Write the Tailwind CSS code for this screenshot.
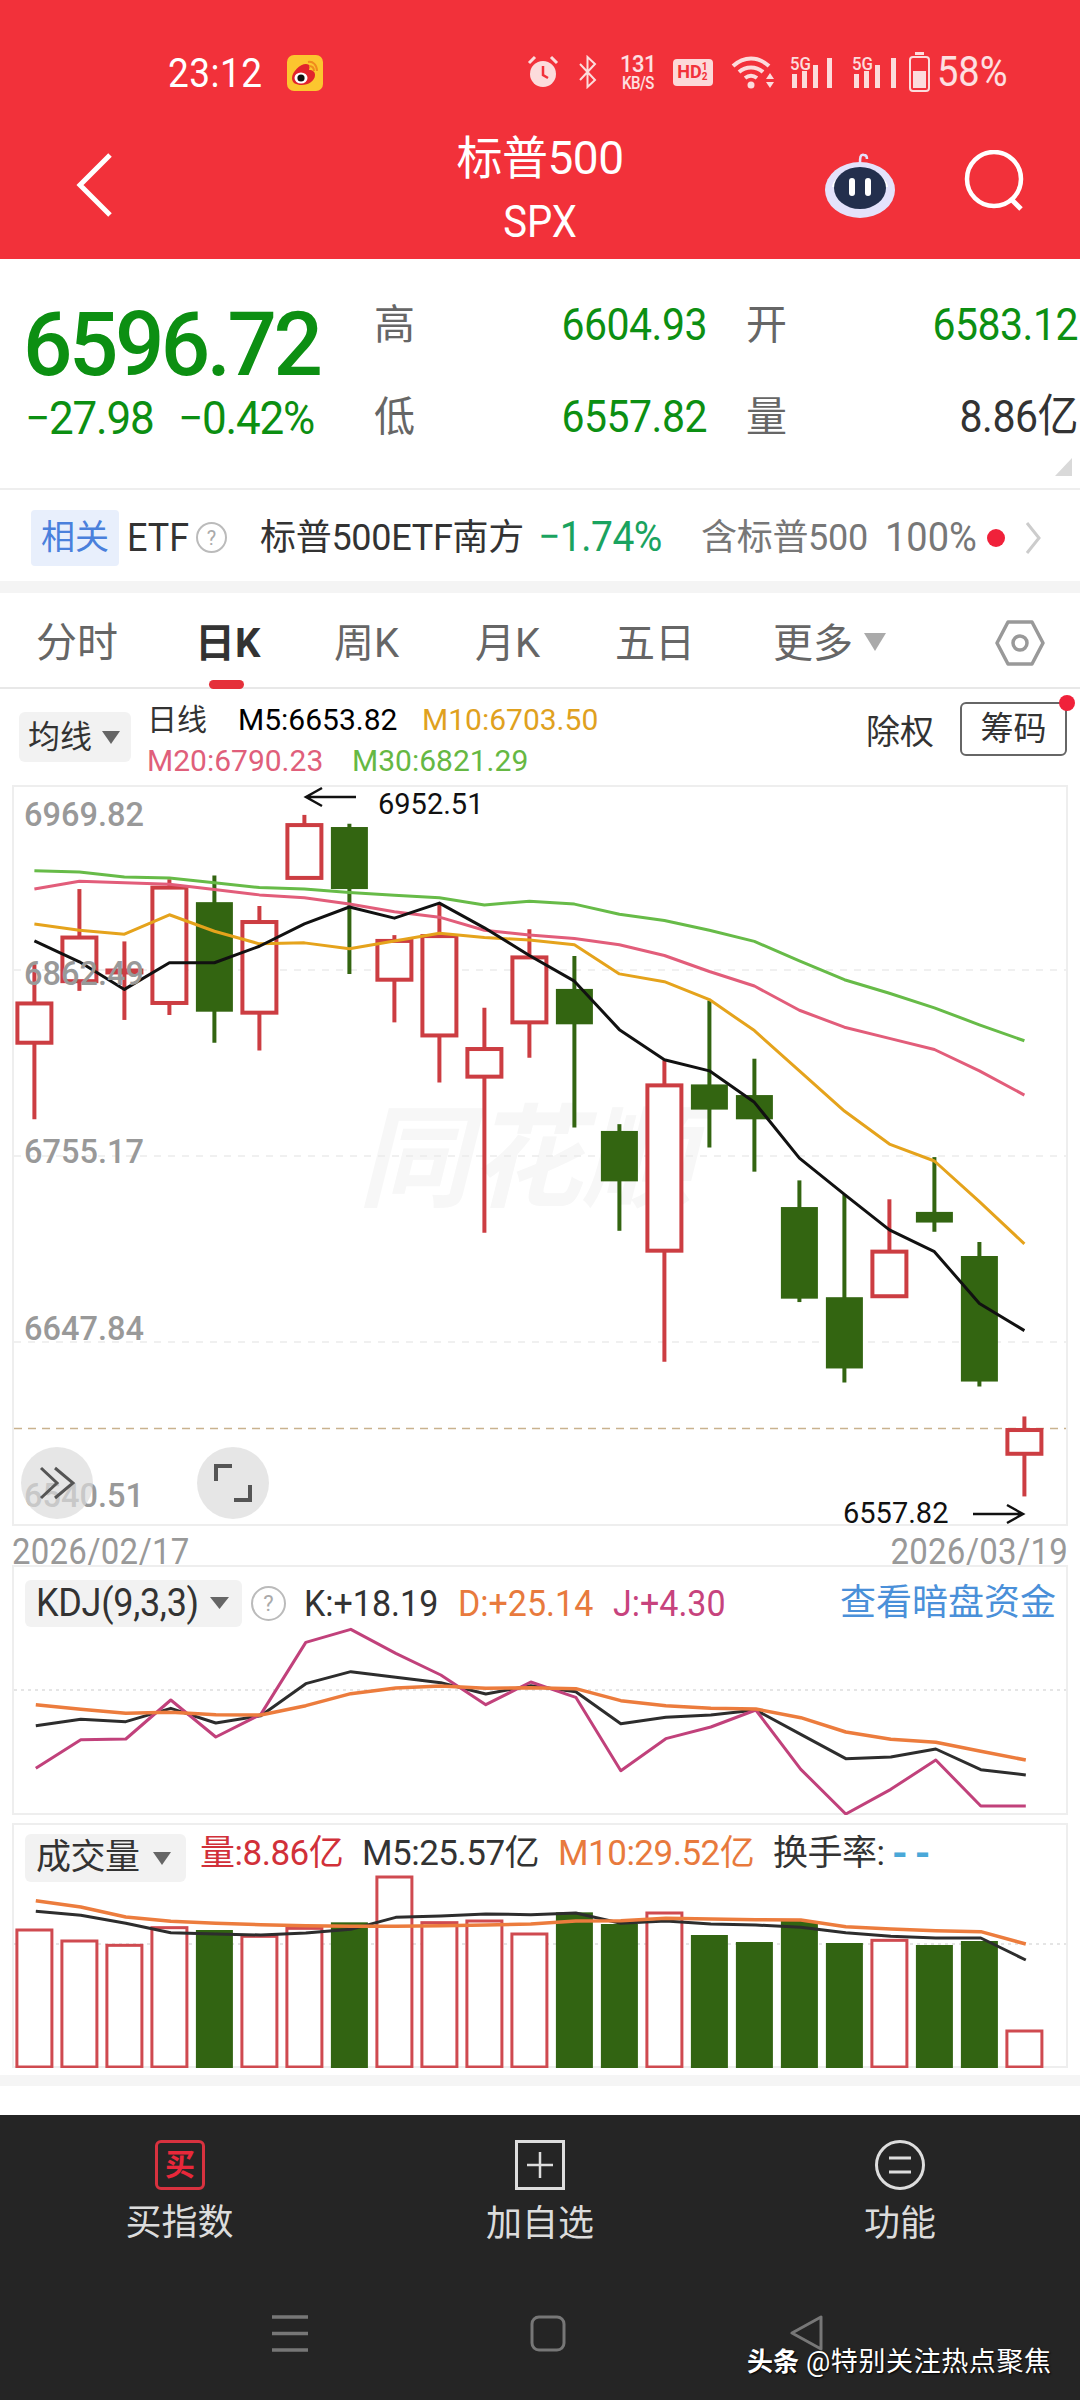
<!DOCTYPE html>
<html lang="zh-CN">
<head>
    <meta charset="UTF-8">
    <meta name="viewport" content="width=device-width, initial-scale=1.0">
    <title>标普500</title>
    <script src="https://cdn.jsdelivr.net/npm/@tailwindcss/browser@4"></script>
</head>
<body class="w-[1080px] h-[2400px] overflow-hidden bg-white font-[Roboto,'Noto_Sans_CJK_SC',sans-serif] text-[#333]">

    <!-- 顶部红色区域 -->
    <header class="h-[259px] bg-[#f2313a] text-white">
        <div class="h-[116px] pt-[30px] flex items-center relative">
            <span class="ml-[168px] text-[37px] leading-none tracking-[0.5px] scale-y-[1.08]">23:12</span>
            <svg class="ml-[24px]" width="36" height="36" viewBox="0 0 36 36">
                <rect width="36" height="36" rx="7" fill="#fcc62f"/>
                <path d="M5 23c0-6 8-14 14-14 4 0 4 3 3 6 4 0 6 2 6 5 0 6-7 10-13 10S5 28 5 23z" fill="#e2232c"/>
                <ellipse cx="14" cy="23" rx="6.500" ry="5.500" fill="#fff"/>
                <circle cx="14" cy="23" r="3.600" fill="#111"/>
                <path d="M21 7c5-1 9 3 9 9M22 11c3 0 5 2 5 5" fill="none" stroke="#f08a1d" stroke-width="2"/>
            </svg>
            <div class="absolute left-[527px] top-[52px] h-[40px] w-[490px] flex items-center text-white/85">
                <svg width="32" height="34" viewBox="0 0 32 34">
                    <circle cx="16" cy="19" r="13" fill="#fcdcdc"/>
                    <path d="M16 11v9l5 3" fill="none" stroke="#f2313a" stroke-width="2.500"/>
                    <path d="M2 8l6-6M30 8l-6-6" stroke="#fcdcdc" stroke-width="3"/>
                </svg>
                <svg class="ml-[18px]" width="21" height="34" viewBox="0 0 21 34">
                    <path d="M3 9l15 16-7.500 7V2l7.500 7L3 25" fill="none" stroke="#fcdcdc" stroke-width="2"/>
                </svg>
                <div class="ml-[20px] w-[40px] flex flex-col items-center font-medium">
                    <span class="text-[22px] leading-[19px] tracking-[-0.5px] scale-y-[1.1]">131</span>
                    <span class="text-[15px] leading-[15px] mt-[3px] tracking-[-0.5px] scale-y-[1.2]">KB/S</span>
                </div>
                <div class="ml-[15px] w-[40px] h-[27px] rounded-[4px] bg-[#fcd9d9] flex items-center justify-center text-[#f2313a] text-[18px] font-bold leading-none">HD<span class="text-[10px] leading-[10px] w-[7px]">1 2</span></div>
                <svg class="ml-[17px]" width="46" height="34" viewBox="0 0 46 34">
                    <path d="M3 11c11-10 25-10 36 0M9 17c7-6 17-6 24 0M15 23c4-3 8-3 12 0" fill="none" stroke="#fcdcdc" stroke-width="4"/>
                    <circle cx="21" cy="30" r="3.500" fill="#fcdcdc"/>
                    <path d="M36 24l4-6 4 6zM36 27l4 6 4-6z" fill="#fcdcdc"/>
                </svg>
                <svg class="ml-[14px] overflow-visible" width="45" height="34" viewBox="0 0 45 34" fill="#fcdcdc">
                    <rect x="2" y="19" width="5" height="14"/><rect x="12" y="16" width="5" height="17"/><rect x="23" y="10" width="5" height="23"/><rect x="37" y="3" width="5" height="30"/>
                    <text x="0" y="15" font-size="18" font-weight="500" textLength="21" lengthAdjust="spacingAndGlyphs">5G</text>
                </svg>
                <svg class="ml-[17px] overflow-visible" width="47" height="34" viewBox="0 0 47 34" fill="#fcdcdc">
                    <rect x="2" y="19" width="5" height="14"/><rect x="12" y="16" width="5" height="17"/><rect x="23" y="10" width="5" height="23"/><rect x="39" y="3" width="5" height="30"/>
                    <text x="0" y="15" font-size="18" font-weight="500" textLength="21" lengthAdjust="spacingAndGlyphs">5G</text>
                </svg>
                <svg class="ml-[10px]" width="21" height="40" viewBox="0 0 21 40">
                    <rect x="6" y="0" width="9" height="3" fill="#fcdcdc"/>
                    <rect x="1" y="5" width="19" height="34" rx="3" fill="none" stroke="#fcdcdc" stroke-width="2"/>
                    <rect x="4" y="19" width="13" height="17" fill="#fcdcdc"/>
                </svg>
                <span class="ml-[7px] text-[38px] leading-none scale-y-[1.1]">58%</span>
            </div>
        </div>
        <div class="h-[143px] grid grid-cols-[1fr_auto_1fr]">
            <svg class="ml-[76px] mt-[36px]" width="38" height="66" viewBox="0 0 38 66">
                <path d="M34 3L4 33l30 30" fill="none" stroke="#fff" stroke-width="5"/>
            </svg>
            <div class="flex flex-col items-center pt-[17px]">
                <span class="text-[46px] leading-[50px] tracking-[-0.5px]">标普500</span>
                <span class="text-[40px] leading-[46px] mt-[17px] scale-y-[1.1]">SPX</span>
            </div>
            <div class="flex justify-end items-start pr-[54px]">
                <svg class="mt-[37px]" width="72" height="66" viewBox="0 0 72 66">
                    <path d="M36 10c0-5 0-9 4-8 2 0 3 2 3 4" fill="none" stroke="#e4e0fa" stroke-width="2.500"/>
                    <ellipse cx="36" cy="37" rx="35" ry="28" fill="#e4e2fb"/>
                    <path d="M8 34C10 14 62 14 64 34" fill="#fff"/>
                    <ellipse cx="36" cy="35" rx="26" ry="21" fill="#232f4d"/>
                    <rect x="25" y="25" width="6" height="18" rx="3" fill="#fff"/>
                    <rect x="41" y="25" width="6" height="18" rx="3" fill="#fff"/>
                </svg>
                <svg class="ml-[68px] mt-[34px]" width="62" height="62" viewBox="0 0 62 62">
                    <circle cx="30" cy="29" r="27" fill="none" stroke="#fff" stroke-width="4.500"/>
                    <path d="M47 49l10 10" stroke="#fff" stroke-width="5"/>
                </svg>
            </div>
        </div>
    </header>

    <!-- 行情数据 -->
    <section class="h-[231px] border-b-2 border-[#eee] flex relative">
        <div class="w-[374px] pl-[23px] pt-[41px] shrink-0 text-[#0c8f12]">
            <div class="text-[87px] leading-[88px] font-medium tracking-[-3.500px] scale-y-[1.03] origin-left">6596.72</div>
            <div class="h-[60px] pl-[2px] flex items-center text-[44px] tracking-[-1.200px] leading-none">
                <span class="w-[153px] scale-y-[1.05]">−27.98</span><span class="scale-y-[1.05]">−0.42%</span>
            </div>
        </div>
        <div class="grid grid-cols-[333px_332px] gap-x-[39px] gap-y-[28px] pt-[35px] auto-rows-[64px] text-[41px]">
            <div class="flex justify-between items-center"><span class="text-[#666]">高</span><span class="text-[#0c8f12] tracking-[-0.500px] scale-y-[1.1]">6604.93</span></div>
            <div class="flex justify-between items-center"><span class="text-[#666]">开</span><span class="text-[#0c8f12] tracking-[-0.500px] scale-y-[1.1]">6583.12</span></div>
            <div class="flex justify-between items-center"><span class="text-[#666]">低</span><span class="text-[#0c8f12] tracking-[-0.500px] scale-y-[1.1]">6557.82</span></div>
            <div class="flex justify-between items-center"><span class="text-[#666]">量</span><span class="text-[#333] tracking-[-0.500px] scale-y-[1.1]">8.86亿</span></div>
        </div>
        <svg class="absolute left-[1055px] top-[199px]" width="17" height="18" viewBox="0 0 17 18"><path d="M17 0v18H0z" fill="#d9d9d9"/></svg>
    </section>

    <!-- 相关ETF -->
    <section class="h-[91px] pt-[4px] flex items-center">
        <span class="ml-[31px] w-[88px] h-[56px] rounded-[4px] bg-[#e8effc] text-[#4a80dc] text-[34px] flex items-center justify-center">相关</span>
        <span class="ml-[8px] w-[69px] text-[36px] scale-y-[1.08] origin-left">ETF</span>
        <span class="w-[31px] h-[31px] rounded-full border-2 border-[#bbb] text-[#aaa] text-[20px] flex items-center justify-center">?</span>
        <span class="ml-[33px] w-[278px] text-[36px] tracking-[-0.300px] whitespace-nowrap">标普500ETF南方</span>
        <span class="w-[163px] text-[#1aa35f] text-[39px] tracking-[-0.500px] scale-y-[1.08] origin-left">−1.74%</span>
        <span class="w-[184px] text-[#777] text-[36px] tracking-[-0.300px] whitespace-nowrap">含标普500</span>
        <span class="w-[102px] text-[#777] text-[38px] scale-y-[1.08] origin-left">100%</span>
        <span class="w-[18px] h-[18px] rounded-full bg-[#f0213a]"></span>
        <svg class="ml-[20px]" width="16" height="32" viewBox="0 0 16 32"><path d="M2 1l12 15L2 31" fill="none" stroke="#ccc" stroke-width="3"/></svg>
    </section>
    <div class="h-[12px] bg-[#f4f4f4]"></div>

    <!-- 周期切换 -->
    <nav class="h-[96px] border-b-2 border-[#e8e8e8] flex items-center pt-[8px] text-[40px] text-[#666] relative">
        <span class="ml-[36px] w-[159px] text-[41px]">分时</span>
        <span class="w-[139px] font-bold text-[#333] relative">日K<i class="absolute left-[14px] top-[66px] w-[35px] h-[9px] rounded-full bg-[#e5303a]"></i></span>
        <span class="w-[141px]">周K</span>
        <span class="w-[140px]">月K</span>
        <span class="w-[158px]">五日</span>
        <span class="w-[91px]">更多</span>
        <svg class="mb-[4px]" width="22" height="18" viewBox="0 0 22 18"><path d="M0 0h22L11 18z" fill="#aaa"/></svg>
        <svg class="ml-[109px] mb-[2px]" width="50" height="46" viewBox="0 0 50 46">
            <path d="M13 2h24l11 21-11 21H13L2 23z" fill="none" stroke="#999" stroke-width="3.500" stroke-linejoin="round"/>
            <circle cx="25" cy="23" r="7" fill="none" stroke="#999" stroke-width="3.500"/>
        </svg>
    </nav>

    <!-- 均线信息 -->
    <section class="h-[96px] flex items-center relative">
        <div class="ml-[19px] w-[112px] h-[50px] rounded-[6px] bg-[#f2f2f2] flex items-center pl-[9px] text-[32px]">
            <span class="w-[74px]">均线</span>
            <svg width="18" height="13" viewBox="0 0 18 13"><path d="M0 0h18L9 13z" fill="#666"/></svg>
        </div>
        <div class="ml-[16px] w-[720px] pt-[5px] text-[30px] leading-[41px]">
            <div class="flex"><span class="w-[91px]">日线</span><span class="w-[184px] text-black">M5:6653.82</span><span class="text-[#e0a11e]">M10:6703.50</span></div>
            <div class="flex"><span class="w-[205px] text-[#e05f7b]">M20:6790.23</span><span class="text-[#66b843]">M30:6821.29</span></div>
        </div>
        <span class="text-[34px] ml-[-1px] pb-[10px]">除权</span>
        <div class="ml-[26px] mb-[16px] w-[107px] h-[54px] rounded-[6px] border-2 border-[#666] text-[33px] flex items-center justify-center relative">筹码<i class="absolute right-[-10px] top-[-9px] w-[16px] h-[16px] rounded-full bg-[#f0213a]"></i></div>
    </section>

    <!-- K线图 -->
    <div class="h-[741px] relative">
        <svg id="kline" class="block overflow-visible" width="1080" height="741" viewBox="0 785 1080 741"></svg>
        <button class="absolute left-[21px] top-[662px] w-[72px] h-[72px] rounded-full bg-[#dcdcdc]/70 flex items-center justify-center">
            <svg width="36" height="34" viewBox="0 0 36 34"><path d="M2 2l16 15L2 32M16 2l18 15-18 15" fill="none" stroke="#555" stroke-width="3"/></svg>
        </button>
        <button class="absolute left-[197px] top-[662px] w-[72px] h-[72px] rounded-full bg-[#dcdcdc]/70 flex items-center justify-center">
            <svg width="38" height="38" viewBox="0 0 38 38"><path d="M2 17V2h16M36 21v15H20" fill="none" stroke="#555" stroke-width="4"/></svg>
        </button>
    </div>
    <div class="h-[39px] flex justify-between items-center px-[12px] pt-[12px] text-[33px] leading-none text-[#999] tracking-[0.200px]">
        <span class="scale-y-[1.1]">2026/02/17</span><span class="scale-y-[1.1]">2026/03/19</span>
    </div>

    <!-- KDJ -->
    <div class="h-[250px] relative">
        <svg id="kdj" class="absolute inset-0" width="1080" height="250" viewBox="0 1565 1080 250"></svg>
        <div class="relative pt-[11px] pl-[25px] flex items-center text-[34px]">
            <div class="w-[217px] h-[47px] rounded-[6px] bg-[#f2f2f2] flex items-center pl-[11px]">
                <span class="w-[174px] whitespace-nowrap text-[36px] tracking-[-0.3px] scale-y-[1.1] origin-left">KDJ(9,3,3)</span>
                <svg width="19" height="12" viewBox="0 0 19 12"><path d="M0 0h19L9.500 12z" fill="#666"/></svg>
            </div>
            <span class="ml-[9px] w-[35px] h-[35px] rounded-full border-2 border-[#bbb] text-[#aaa] text-[22px] flex items-center justify-center">?</span>
            <span class="ml-[18px] w-[154px] scale-y-[1.1] origin-left">K:+18.19</span>
            <span class="w-[155px] text-[#e87a3d] scale-y-[1.1] origin-left">D:+25.14</span>
            <span class="w-[227px] text-[#c7437d] scale-y-[1.1] origin-left">J:+4.30</span>
            <span class="text-[#4a90d9] text-[36px]">查看暗盘资金</span>
        </div>
    </div>
    <div class="h-[8px]"></div>

    <!-- 成交量 -->
    <div class="h-[245px] relative">
        <svg id="vol" class="absolute inset-0" width="1080" height="245" viewBox="0 1823 1080 245"></svg>
        <div class="relative pt-[11px] pl-[25px] flex items-start text-[35px] tracking-[-0.500px]">
            <div class="w-[161px] h-[48px] rounded-[6px] bg-[#f2f2f2] flex items-center pl-[11px]">
                <span class="w-[117px] text-[35px]">成交量</span>
                <svg width="18" height="13" viewBox="0 0 18 13"><path d="M0 0h18L9 13z" fill="#666"/></svg>
            </div>
            <span class="ml-[14px] mt-[2px] w-[162px] text-[#d13039] leading-[36px] whitespace-nowrap">量:8.86亿</span>
            <span class="mt-[2px] w-[196px] leading-[36px] whitespace-nowrap">M5:25.57亿</span>
            <span class="mt-[2px] w-[215px] text-[#e87a3d] leading-[36px] whitespace-nowrap">M10:29.52亿</span>
            <span class="mt-[2px] w-[119px] leading-[36px] whitespace-nowrap">换手率:</span>
            <span class="mt-[2px] text-[#4aa8d8] font-bold leading-[36px] tracking-[7px] text-[40px]">--</span>
        </div>
    </div>
    <div class="h-[7px]"></div>
    <div class="h-[11px] bg-[#f5f5f5]"></div>
    <div class="h-[29px]"></div>

    <!-- 底部操作栏 -->
    <footer class="h-[285px] bg-[#252525] relative">
        <div class="grid grid-cols-[360px_360px_360px] pt-[25px] text-[#dcdcdc] text-[36px] leading-[40px]">
            <div class="flex flex-col items-center">
                <div class="w-[50px] h-[50px] rounded-[6px] border-[3px] border-[#d8323f] flex items-center justify-center text-[#e8283a] text-[30px] font-bold leading-none">买</div>
                <span class="mt-[13px] ml-[-1px]">买指数</span>
            </div>
            <div class="flex flex-col items-center">
                <svg width="50" height="50" viewBox="0 0 50 50"><rect x="1.500" y="1.500" width="47" height="47" fill="none" stroke="#ddd" stroke-width="3"/><path d="M25 12v26M12 25h26" stroke="#ddd" stroke-width="2.500"/></svg>
                <span class="mt-[14px]">加自选</span>
            </div>
            <div class="flex flex-col items-center">
                <svg width="50" height="50" viewBox="0 0 50 50"><circle cx="25" cy="25" r="23.500" fill="none" stroke="#ddd" stroke-width="3"/><path d="M14 18h22M14 32h22" stroke="#ddd" stroke-width="3"/></svg>
                <span class="mt-[14px]">功能</span>
            </div>
        </div>
        <div class="absolute left-0 top-[200px] w-full h-[38px]">
            <svg class="absolute left-[272px] top-0" width="36" height="37" viewBox="0 0 36 37"><path d="M0 2h36M0 18.500h36M0 35h36" stroke="#777" stroke-width="3.500"/></svg>
            <svg class="absolute left-[530px] top-0" width="36" height="37" viewBox="0 0 36 37"><rect x="2" y="2" width="32" height="33" rx="7" fill="none" stroke="#777" stroke-width="3"/></svg>
            <svg class="absolute left-[789px] top-0" width="34" height="36" viewBox="0 0 34 36"><path d="M32 2v32L3 18z" fill="none" stroke="#777" stroke-width="3" stroke-linejoin="round"/></svg>
        </div>
        <div class="absolute left-[747px] top-[229px] pt-[2px] flex items-center text-white leading-[32px] [text-shadow:1px_1px_2px_#000]">
            <span class="text-[26px] font-bold w-[59px]">头条</span>
            <span class="text-[27px] tracking-[0.600px] whitespace-nowrap">@特别关注热点聚焦</span>
        </div>
    </footer>

    <script>
        const SVG_NS = 'http://www.w3.org/2000/svg';
        const RED = '#cc3d42', GREEN = '#336511';

        function add(parent, tag, attrs, text) {
            const el = document.createElementNS(SVG_NS, tag);
            for (const k in attrs) el.setAttribute(k, attrs[k]);
            if (text) el.textContent = text;
            parent.appendChild(el);
            return el;
        }

        function line(parent, vals, xAt, yAt, color, width) {
            const points = vals.map((v, i) => xAt(i) + ',' + yAt(v)).join(' ');
            add(parent, 'polyline', { points, fill: 'none', stroke: color, 'stroke-width': width, 'stroke-linejoin': 'round' });
        }

        // --- K线 ---
        const kline = document.getElementById('kline');
        const kx = i => 34.4 + 45 * i;
        const ky = p => 780 + p / 2.063;
        // [最高, 实体上沿, 实体下沿, 最低, 是否下跌]
        const candles = [
            [380,461,542,700,0],[225,325,415,435,0],[333,393,397,495,0],[205,222,460,485,0],
            [197,252,478,542,1],[260,293,480,558,0],[72,93,202,202,0],[90,97,225,400,1],
            [320,332,412,500,0],[255,322,527,624,0],[470,555,612,934,0],[308,366,500,573,0],
            [363,431,504,717,1],[710,724,828,930,1],[578,630,971,1200,0],[455,628,680,758,1],
            [575,650,700,808,1],[826,881,1070,1077,1],[855,1067,1214,1243,1],[865,973,1065,1065,0],
            [778,891,913,932,1],[953,982,1241,1251,1],[1313,1341,1390,1478,0]
        ];
        add(kline, 'rect', { x: 13, y: 786, width: 1054, height: 739, fill: '#fff', stroke: '#eee', 'stroke-width': 2 });
        add(kline, 'text', { x: 358, y: 1198, 'font-size': 112, 'font-style': 'italic', fill: '#f7f7f7', 'font-weight': 700 }, '同花顺');
        [970, 1156, 1342].forEach(y => add(kline, 'line', { x1: 14, x2: 1066, y1: y, y2: y, stroke: '#ececec', 'stroke-width': 1.5, 'stroke-dasharray': '7 7' }));
        add(kline, 'line', { x1: 14, x2: 1066, y1: 1428.5, y2: 1428.5, stroke: '#c9b28e', 'stroke-width': 1.5, 'stroke-dasharray': '8 6' });

        candles.forEach((c, i) => {
            const x = kx(i), color = c[4] ? GREEN : RED;
            add(kline, 'line', { x1: x, x2: x, y1: ky(c[0]), y2: ky(c[3]), stroke: color, 'stroke-width': 4 });
            if (c[4]) add(kline, 'rect', { x: x - 18.5, y: ky(c[1]), width: 37, height: ky(c[2]) - ky(c[1]), fill: color });
            else add(kline, 'rect', { x: x - 17, y: ky(c[1]), width: 34, height: ky(c[2]) - ky(c[1]), fill: '#fff', stroke: color, 'stroke-width': 4 });
        });

        line(kline, [187,190,200,202,212,222,225,232,238,243,258,250,256,277,290,310,333,373,412,440,470,505,538], kx, ky, '#67bb48', 3);
        line(kline, [225,209,212,215,226,237,243,256,272,283,310,320,327,340,362,395,425,475,510,533,556,600,650], kx, ky, '#e25d7a', 3);
        line(kline, [297,310,318,278,312,338,336,348,332,316,325,330,340,400,416,453,517,600,683,751,786,870,957], kx, ky, '#e5a31c', 3);
        line(kline, [332,375,432,377,377,343,297,262,285,254,305,362,415,515,577,600,665,780,855,928,973,1080,1136], kx, ky, '#111', 3);

        [['6969.82', 826], ['6862.49', 985], ['6755.17', 1163], ['6647.84', 1340], ['6540.51', 1507]].forEach(t =>
            add(kline, 'text', { x: 24, y: t[1], 'font-size': 32.5, 'font-weight': 500, fill: '#999' }, t[0]));

        add(kline, 'text', { x: 378, y: 814, 'font-size': 29, fill: '#111' }, '6952.51');
        add(kline, 'path', { d: 'M356 797H306M322 788l-16 9 16 9', fill: 'none', stroke: '#111', 'stroke-width': 2.5 });
        add(kline, 'text', { x: 843, y: 1523, 'font-size': 29, fill: '#111' }, '6557.82');
        add(kline, 'path', { d: 'M973 1514H1023M1007 1505l16 9-16 9', fill: 'none', stroke: '#111', 'stroke-width': 2.5 });

        // --- KDJ ---
        const kdj = document.getElementById('kdj');
        const lx = i => 35.8 + 45 * i;
        const dy = p => 1540 + p / 3;
        add(kdj, 'rect', { x: 13, y: 1566, width: 1054, height: 248, fill: '#fff', stroke: '#eee', 'stroke-width': 2 });
        add(kdj, 'line', { x1: 14, x2: 1066, y1: 1690, y2: 1690, stroke: '#ddd', 'stroke-width': 1.5, 'stroke-dasharray': '3 4' });
        line(kdj, [557,538,545,505,549,527,431,395,412,428,462,437,455,551,532,525,510,583,656,651,627,689,705], lx, dy, '#2d2d2d', 3);
        line(kdj, [685,599,597,480,591,523,307,268,340,405,494,426,472,692,596,561,510,688,822,748,660,798,798], lx, dy, '#c1417b', 3);
        line(kdj, [494,508,520,517,524,525,497,461,444,438,445,443,446,482,497,505,507,533,576,598,607,634,660], lx, dy, '#ec7c3d', 3.5);

        // --- 成交量 ---
        const vol = document.getElementById('vol');
        const vy = p => 1810 + p / 3;
        add(vol, 'rect', { x: 13, y: 1824, width: 1054, height: 243, fill: '#fff', stroke: '#eee', 'stroke-width': 2 });
        add(vol, 'line', { x1: 14, x2: 1066, y1: 1944, y2: 1944, stroke: '#ddd', 'stroke-width': 1.5, 'stroke-dasharray': '3 4' });
        [[357,0],[390,0],[403,0],[350,0],[360,1],[376,0],[352,0],[337,1],[198,0],[335,0],[330,0],[369,0],
         [307,1],[342,1],[306,0],[375,1],[396,1],[333,1],[399,1],[388,0],[405,1],[393,1],[660,0]].forEach((b, i) => {
            const x = kx(i), top = vy(b[0]), bottom = 2068;
            if (b[1]) add(vol, 'rect', { x: x - 18.5, y: top, width: 37, height: bottom - top, fill: '#326412' });
            else add(vol, 'rect', { x: x - 17.5, y: top + 1, width: 35, height: bottom - top - 2, fill: '#fff', stroke: '#cf4a50', 'stroke-width': 3 });
        });
        line(vol, [304,316,340,368,372,375,369,358,322,318,312,314,309,340,333,342,345,352,368,379,384,384,450], lx, vy, '#2d2d2d', 3);
        line(vol, [272,291,321,334,340,344,347,349,349,347,345,342,333,332,325,327,329,330,350,357,362,365,402], lx, vy, '#ec7c3d', 3.5);
    </script>
</body>
</html>
